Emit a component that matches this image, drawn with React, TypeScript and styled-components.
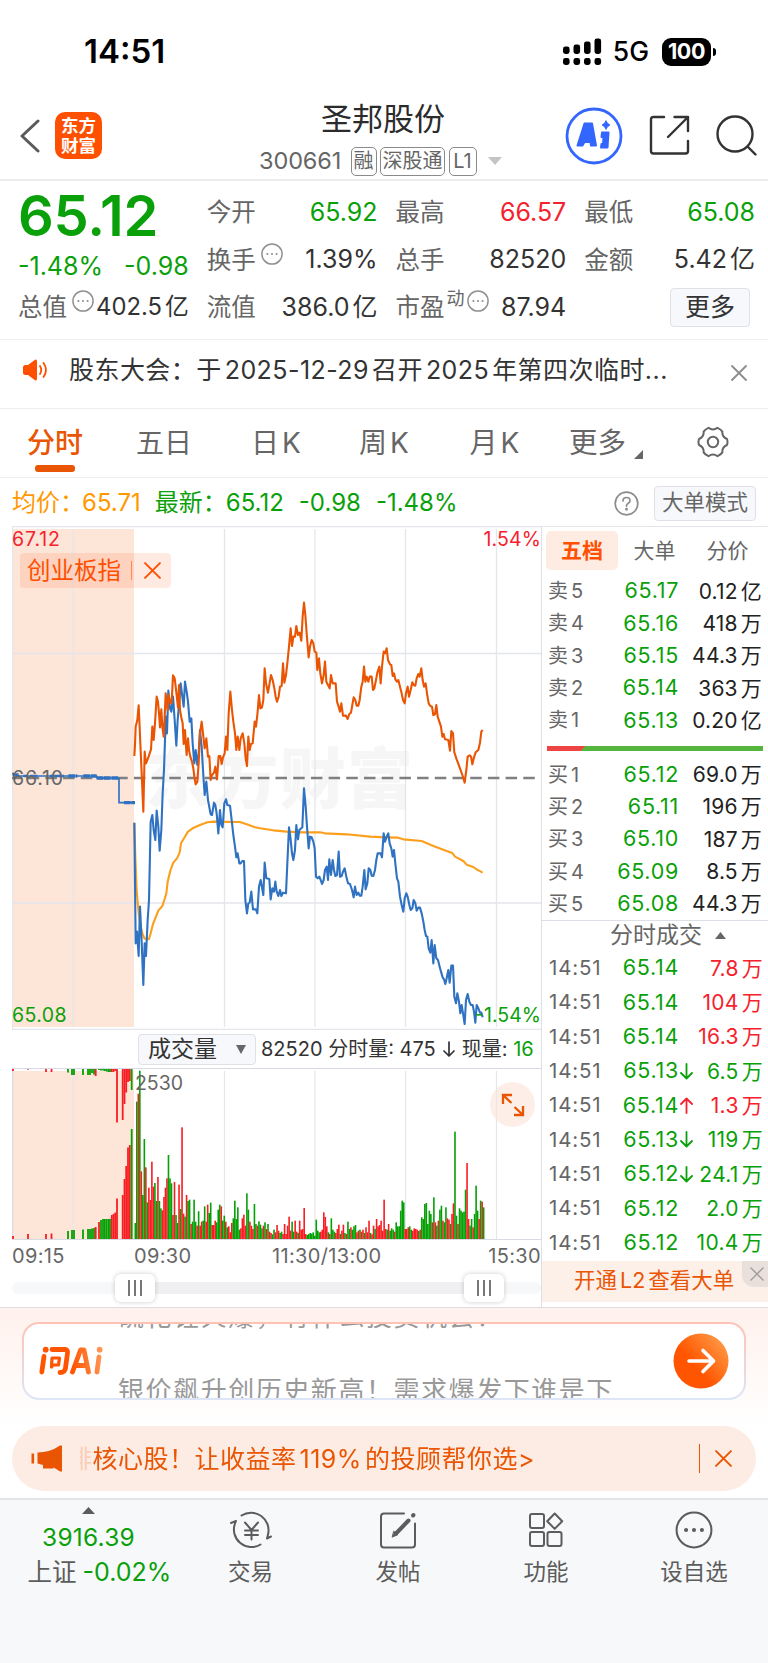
import React from "react";
import styled, { createGlobalStyle } from "styled-components";

const GREEN = "#0aa00a";
const RED = "#f5222d";
const ORANGE = "#ea5504";
const BRAND = "#ff4f00";
const GREY = "#666666";
const INK = "#333333";
const LINE = "#e4e6ec";

const Global = createGlobalStyle`
  * { box-sizing: border-box; }
  body {
    margin: 0;
    background: #fff;
    font-family: Inter, "Noto Sans CJK SC", sans-serif;
    line-height: 1;
    color: ${INK};
  }
  svg { display: block; flex: none; }
`;

const Page = styled.div`
  width: 768px;
  height: 1663px;
  overflow: hidden;
  display: flex;
  flex-direction: column;
  white-space: nowrap;
`;

const Txt = styled.span<{ $s: number; $c?: string; $ls?: number; $w?: number; $ml?: number; $mt?: number }>`
  font-size: ${(p) => p.$s}px;
  color: ${(p) => p.$c ?? "inherit"};
  letter-spacing: ${(p) => p.$ls ?? 0}px;
  font-weight: ${(p) => p.$w ?? 400};
  margin-left: ${(p) => p.$ml ?? 0}px;
  margin-top: ${(p) => p.$mt ?? 0}px;
`;

const Unit = styled.span`
  margin-left: 3px;
`;

/* ---------- status bar ---------- */

const StatusBar = styled.div`
  height: 92px;
  padding: 11px 52px 0 84px;
  display: flex;
  align-items: center;
  color: #000;
`;

const StatusRight = styled.div`
  margin-left: auto;
  display: flex;
  align-items: center;
`;

const Battery = styled.div`
  width: 49px;
  height: 28px;
  margin-left: 13px;
  border-radius: 9px;
  background: #000;
  color: #fff;
  display: flex;
  align-items: center;
  justify-content: center;
`;

const BatteryTip = styled.div`
  width: 3px;
  height: 8px;
  margin-left: 2px;
  border-radius: 0 4px 4px 0;
  background: #000;
`;

/* ---------- header ---------- */

const Header = styled.header`
  height: 89px;
  border-bottom: 2px solid #ececec;
  padding: 0 11px 0 20px;
  display: grid;
  grid-template-columns: 240px 1fr 192px;
  align-items: center;
`;

const HeaderLeft = styled.div`
  display: flex;
  align-items: center;
  gap: 13px;
`;

const Logo = styled.div`
  width: 47px;
  height: 47px;
  border-radius: 10px;
  background: ${BRAND};
  color: #fff;
  display: flex;
  align-items: center;
  justify-content: center;
  text-align: center;
  font-size: 17.5px;
  line-height: 20px;
  font-weight: 700;
  white-space: pre-line;
`;

const Title = styled.div`
  height: 87px;
  display: flex;
  flex-direction: column;
  padding-top: 11px;
`;

const TitleName = styled.div`
  font-size: 31px;
  color: #2b2b2b;
  padding-left: 61px;
  height: 41px;
`;

const CodeRow = styled.div`
  display: flex;
  align-items: center;
  gap: 3.5px;
  height: 32px;
  margin-top: 1px;
`;

const Code = styled.span`
  width: 88px;
  font-size: 23.5px;
  letter-spacing: -0.1px;
  color: ${GREY};
  margin-left: -1px;
`;

const Tag = styled.span<{ $w: number }>`
  width: ${(p) => p.$w}px;
  height: 29px;
  border: 1.5px solid #8a8a8a;
  border-radius: 5px;
  color: ${GREY};
  font-size: 20px;
  display: flex;
  align-items: center;
  justify-content: center;
`;

const HeaderRight = styled.div`
  display: flex;
  align-items: center;
  justify-content: flex-end;
  gap: 26px;
`;

/* ---------- quote ---------- */

const Quote = styled.section`
  height: 159px;
  padding: 7.5px 13px 0 18px;
  border-bottom: 1px solid #eeeeee;
  display: grid;
  grid-template-columns: repeat(4, 1fr);
  column-gap: 18px;
`;

const QuoteCol = styled.div`
  display: flex;
  flex-direction: column;
`;

const QuoteRow = styled.div`
  height: 47.5px;
  display: flex;
  align-items: center;
  justify-content: space-between;
`;

const PriceBig = styled.div`
  height: 54px;
  font-size: 56px;
  font-weight: 600;
  letter-spacing: -0.2px;
  color: ${GREEN};
  display: flex;
  align-items: center;
`;

const PriceDelta = styled.div`
  height: 41px;
  padding-top: 7px;
  display: flex;
  align-items: center;
  justify-content: space-between;
  color: ${GREEN};
`;

const Label = styled.div`
  display: flex;
  align-items: center;
  font-size: 24.5px;
  color: ${GREY};
`;

const Hint = styled.span`
  margin: 0 0 12px 5px;
`;

const Sup = styled.span`
  font-size: 18px;
  margin: 0 -3px 16px 2px;
`;

const GhostButton = styled.button<{ $w: number; $h: number; $s: number }>`
  width: ${(p) => p.$w}px;
  height: ${(p) => p.$h}px;
  padding: 0;
  border: 1.5px solid #dfe1e6;
  border-radius: 4px;
  background: #f7f8fb;
  color: ${INK};
  font: ${(p) => p.$s}px/1 Inter, "Noto Sans CJK SC", sans-serif;
  display: flex;
  align-items: center;
  justify-content: center;
`;

const MoreSlot = styled.div`
  margin: 0 5px 0 auto;
`;

/* ---------- notice ---------- */

const Notice = styled.section`
  height: 69px;
  border-bottom: 1px solid #eeeeee;
  padding: 0 21px 8px 22px;
  display: flex;
  align-items: center;
`;

const NoticeText = styled.div`
  flex: 1;
  margin-left: 21px;
  font-size: 25px;
  letter-spacing: 0.45px;
`;

const NoticeClose = styled.div`
  margin-top: 6px;
`;

/* ---------- tabs ---------- */

const Tabs = styled.nav`
  height: 69px;
  border-bottom: 1px solid #eeeeee;
  display: flex;
`;

const Tab = styled.div<{ $x: number; $on?: boolean }>`
  width: ${(p) => p.$x}px;
  padding-top: 20px;
  display: flex;
  flex-direction: column;
  align-items: center;
  font-size: 28px;
  color: ${(p) => (p.$on ? ORANGE : GREY)};
  font-weight: ${(p) => (p.$on ? 500 : 400)};

  &::after {
    content: "";
    width: 40px;
    height: 7px;
    margin-top: 8px;
    border-radius: 3px;
    background: ${(p) => (p.$on ? ORANGE : "transparent")};
  }
`;

const MoreTab = styled.div`
  width: 96px;
  padding-left: 14px;
  display: flex;
  align-items: center;
  gap: 8px;
  font-size: 28.5px;
  color: ${GREY};

  svg { margin-top: 22px; }
`;

const GearSlot = styled.div`
  padding: 17px 0 0 46px;
`;

/* ---------- info line ---------- */

const Info = styled.div`
  height: 48px;
  padding: 2px 12px 0 12px;
  display: flex;
  align-items: center;
  color: ${GREEN};
  font-size: 24px;
`;

const InfoItem = styled.span<{ $ml?: number; $c?: string }>`
  margin-left: ${(p) => p.$ml ?? 0}px;
  color: ${(p) => p.$c ?? "inherit"};
`;

const InfoTools = styled.div`
  margin-left: auto;
  display: flex;
  align-items: center;
  gap: 15px;

  button { color: ${GREY}; }
`;

/* ---------- body ---------- */

const Body = styled.section`
  height: 782px;
  border-bottom: 1px solid #dcdde2;
  display: grid;
  grid-template-columns: 542px 226px;
`;

const ChartCol = styled.div`
  padding-left: 12px;
  border-right: 1px solid #dcdfe6;
  display: flex;
  flex-direction: column;
`;

const Plot = styled.div`
  position: relative;
`;

const Chip = styled.div`
  position: absolute;
  left: 8px;
  top: 27px;
  width: 151px;
  height: 35px;
  border-radius: 4px;
  background: rgba(255, 96, 32, 0.13);
  color: ${BRAND};
  display: flex;
  align-items: center;
  padding-left: 7px;
  font-size: 23.5px;
`;

const ChipRule = styled.span`
  width: 1px;
  height: 19px;
  margin: 0 12px 0 10px;
  background: #ff8a55;
`;

const VolumeHead = styled.div`
  height: 38px;
  padding-left: 126px;
  display: flex;
  align-items: center;
  font-size: 20px;
`;

const VolumeSelect = styled.div`
  width: 118px;
  height: 31px;
  margin-right: 5px;
  border: 1.5px solid #dfe1e6;
  border-radius: 4px;
  background: #f7f8fb;
  display: flex;
  align-items: center;
  justify-content: space-between;
  padding: 0 9px;
  font-size: 23px;
`;

const Expand = styled.div`
  position: absolute;
  left: 478px;
  top: 14px;
  width: 45px;
  height: 45px;
  border-radius: 50%;
  background: rgba(252, 228, 216, 0.6);
  display: flex;
  align-items: center;
  justify-content: center;
`;

const Times = styled.div`
  height: 32px;
  display: grid;
  grid-template-columns: 122px 138px 1fr auto;
  align-items: center;
  font-size: 20px;
  letter-spacing: 0.35px;
  color: ${GREY};
`;

const Slider = styled.div`
  position: relative;
  height: 12px;
  margin-top: 10px;
  border-radius: 6px;
  background: linear-gradient(90deg, #f7f8fa 0 123px, #f0f0f3 123px 470px, #f7f8fa 470px);
`;

const Handle = styled.div<{ $x: number }>`
  position: absolute;
  left: ${(p) => p.$x}px;
  top: -8px;
  width: 40px;
  height: 28px;
  border-radius: 6px;
  background: #fff;
  box-shadow: 0 0 5px rgba(0, 0, 0, 0.2);
  display: flex;
  align-items: center;
  justify-content: center;
  gap: 4px;

  i {
    width: 2px;
    height: 16px;
    background: #777;
  }
`;

/* ---------- order book ---------- */

const Book = styled.aside`
  display: flex;
  flex-direction: column;
`;

const BookTabs = styled.div`
  height: 49px;
  border-top: 1px solid ${LINE};
  padding: 4px 6px 0 4px;
  display: grid;
  grid-template-columns: 72px 73px 73px;
`;

const BookTab = styled.div<{ $on?: boolean }>`
  height: 39px;
  border-radius: 5px;
  background: ${(p) => (p.$on ? "#feece3" : "transparent")};
  color: ${(p) => (p.$on ? BRAND : GREY)};
  font-weight: ${(p) => (p.$on ? 700 : 400)};
  font-size: 21px;
  padding-bottom: 1px;
  display: flex;
  align-items: center;
  justify-content: center;
`;

const Level = styled.div`
  height: 32.3px;
  padding: 0 6px 0 6px;
  display: grid;
  grid-template-columns: 50px 81px 1fr;
  align-items: center;
  font-size: 21px;

  > :nth-child(1) { color: ${GREY}; font-size: 20px; }
  > :nth-child(2) { color: ${GREEN}; text-align: right; font-size: 21.5px; letter-spacing: 0.7px; }
  > :nth-child(3) { text-align: right; color: #222; letter-spacing: 0.2px; }
`;

const Ratio = styled.div`
  width: 216px;
  height: 5px;
  margin: 10px 0 7px 5px;
  background: linear-gradient(135deg, #ef4444 0 27px, #55b53c 27px);
`;

const TradesHead = styled.div`
  height: 31px;
  border-top: 1.5px solid #dcdfe6;
  padding-left: 68px;
  display: flex;
  align-items: center;
  gap: 13px;
  font-size: 23px;
  color: ${GREY};
`;

const Trade = styled.div<{ $c: string }>`
  height: 34.35px;
  padding: 0 5px 0 7px;
  display: grid;
  grid-template-columns: 54px 76px 14px 1fr;
  align-items: center;
  font-size: 21px;
  color: ${(p) => p.$c};

  > :nth-child(1) { color: ${GREY}; font-size: 20.5px; letter-spacing: 0.8px; }
  > :nth-child(2) { color: ${GREEN}; text-align: right; font-size: 21.5px; letter-spacing: 0.7px; }
  > :nth-child(4) { text-align: right; letter-spacing: 0.3px; }
`;

const Promo = styled.div`
  position: relative;
  height: 41px;
  margin-top: 1px;
  background: #fdf0e9;
  color: ${ORANGE};
  display: flex;
  align-items: center;
  padding: 0 0 2px 32px;
  font-size: 21.5px;
`;

const PromoClose = styled.div`
  position: absolute;
  right: 0;
  top: 0;
  width: 26px;
  height: 26px;
  border-radius: 0 0 0 12px;
  background: #e9dfdb;
  display: flex;
  align-items: center;
  justify-content: center;
  padding-left: 4px;
`;

/* ---------- ask ai ---------- */

const AskWrap = styled.section`
  height: 118px;
  padding: 14px 22px 0 22px;
  background: linear-gradient(#fff1ec, #ffffff);
`;

const AskBox = styled.div`
  height: 78px;
  border: 2px solid transparent;
  border-radius: 17px;
  background:
    linear-gradient(#fff, #fff) padding-box,
    linear-gradient(#ffc2b5, #dde5f8) border-box;
  display: flex;
  align-items: center;
  padding: 0 15px 0 15px;
`;

const Ticker = styled.div`
  height: 74px;
  flex: 1;
  margin-left: 15px;
  overflow: hidden;
  display: flex;
  flex-direction: column;
  gap: 47px;
  font-size: 26px;
  letter-spacing: 1.55px;
  color: #999;

  > div { height: 27px; flex: none; }
  > div:first-child { margin-top: -20px; }
`;

/* ---------- banner ---------- */

const BannerWrap = styled.section`
  height: 72px;
  padding: 0 12px;
`;

const Banner = styled.div`
  height: 65px;
  border-radius: 33px;
  background: #fdece3;
  color: ${ORANGE};
  display: flex;
  align-items: center;
  padding: 0 24px 0 19px;
`;

const BannerText = styled.div`
  flex: 1;
  margin-left: 17px;
  overflow: hidden;
  font-size: 25px;
  line-height: 34px;
  mask-image: linear-gradient(90deg, rgba(0, 0, 0, 0.2) 0 11px, #000 12px);

  > span { margin-left: -13px; letter-spacing: 0.5px; }
`;

const BannerRule = styled.span`
  width: 1.5px;
  height: 29px;
  margin-right: 15px;
  background: ${ORANGE};
`;

/* ---------- bottom bar ---------- */

const BottomBar = styled.nav`
  flex: 1;
  border-top: 2px solid #e3e4e6;
  background: #f7f8fa;
  display: grid;
  grid-template-columns: 177px 147px 148px 148px 148px;
`;

const IndexCell = styled.div`
  padding: 7px 0 0 0;
  display: flex;
  flex-direction: column;
  align-items: center;
`;

const NavCell = styled.div`
  padding-top: 11px;
  display: flex;
  flex-direction: column;
  align-items: center;
  gap: 12px;
  font-size: 22.5px;
  color: #5c5c5c;
`;

/* ---------- icons ---------- */

const Cross = ({ size, color, w = 1.8 }: { size: number; color: string; w?: number }) => (
  <svg width={size} height={size} viewBox="0 0 16 16" stroke={color} strokeWidth={w} strokeLinecap="round">
    <path d="M1 1L15 15M15 1L1 15" />
  </svg>
);

const Triangle = ({ w, h, down, color }: { w: number; h: number; down?: boolean; color: string }) => (
  <svg width={w} height={h} viewBox="0 0 10 10" preserveAspectRatio="none" fill={color}>
    <path d={down ? "M0 0H10L5 10Z" : "M0 10H10L5 0Z"} />
  </svg>
);

const Dots = ({ size, color, w, r }: { size: number; color: string; w: number; r: number }) => (
  <svg width={size} height={size} viewBox="0 0 24 24" fill="none" stroke={color} strokeWidth={w}>
    <circle cx="12" cy="12" r="11" />
    <g fill={color} stroke="none">
      <circle cx="7" cy="12" r={r} />
      <circle cx="12" cy="12" r={r} />
      <circle cx="17" cy="12" r={r} />
    </g>
  </svg>
);

const MoreHint = () => (
  <Hint>
    <Dots size={22} color="#909090" w={1.6} r={1.2} />
  </Hint>
);

const Arrow = ({ up, color }: { up?: boolean; color: string }) => (
  <svg width="14" height="17" viewBox="0 0 14 17" fill="none" stroke={color} strokeWidth="1.8" strokeLinecap="round" strokeLinejoin="round">
    <path d={up ? "M7.5 16V2M2 7L7.5 1.5L13 7" : "M7.5 1V15M2 10L7.5 15.5L13 10"} />
  </svg>
);

const Signal = () => (
  <svg width="39" height="28" viewBox="0 0 39 28">
    {[0, 10.5, 21, 31.5].map((x, i) => (
      <React.Fragment key={x}>
        <rect x={x} y={[8.5, 6.5, 3.5, 0.5][i]} width="6.6" height={[7.5, 9.5, 12.5, 15.5][i]} rx="2.4" />
        <rect x={x} y="20" width="6.6" height="7" rx="2.4" />
      </React.Fragment>
    ))}
  </svg>
);

const AiBadge = () => (
  <svg width="58" height="58" viewBox="0 0 58 58">
    <circle cx="29" cy="29" r="27" fill="none" stroke="#3366ff" strokeWidth="2.8" />
    <g fill="#3366ff" stroke="#3366ff" strokeLinejoin="round" strokeWidth="2">
      <path fillRule="evenodd" d="M19.500 16.500H27L31 38.500H26L25.500 35H19.500L17.500 38.500H12.500ZM23.500 24.500L21.700 29.500H24Z" />
      <path d="M37 25.500H43.500L42.500 40.500H36L36.500 37H38L38.500 30H36.500Z" />
      <path strokeWidth="0.8" d="M41 13.600Q42 16.800 45 18Q42 19.200 41 22.500Q40 19.200 37 18Q40 16.800 41 13.600Z" />
    </g>
  </svg>
);

const Share = () => (
  <svg width="41" height="41" viewBox="0 0 41 41" fill="none" stroke="#333" strokeWidth="2.4" strokeLinecap="round" strokeLinejoin="round">
    <path d="M15 2H4.500Q2 2 2 4.500V36Q2 38.500 4.500 38.500H36.500Q39 38.500 39 36V26" />
    <path d="M25.500 2H39V16M38.500 2.500L19 22" />
  </svg>
);

const Search = () => (
  <svg width="41" height="41" viewBox="0 0 41 41" fill="none" stroke="#333" strokeWidth="2.4" strokeLinecap="round">
    <circle cx="19" cy="19" r="17.500" />
    <path d="M31.500 31.500L39.500 39.500" />
  </svg>
);

const Speaker = () => (
  <svg width="26" height="22" viewBox="0 0 26 22" fill={BRAND}>
    <path d="M1 8.500Q1 6 3.500 6H6L13 0.800Q15 0 15 2.500V19.500Q15 22 13 21.200L6 16H3.500Q1 16 1 13.500Z" />
    <g fill="none" stroke={BRAND} strokeWidth="1.8" strokeLinecap="round">
      <path d="M18 7Q20.500 11 18 15" />
      <path d="M21.500 4Q26.500 11 21.500 18" />
    </g>
  </svg>
);

const Gear = () => (
  <svg width="32" height="32" viewBox="0 0 32 32" fill="none" stroke={GREY} strokeWidth="2" strokeLinejoin="round">
    <path d="M11.500 1.800Q16 5.200 20.500 1.800Q24 3.400 25.400 5.600Q24.800 10.600 30 13Q31 16 30 19Q24.800 21.400 25.400 26.400Q24 28.600 20.500 30.200Q16 26.800 11.500 30.200Q8 28.600 6.600 26.400Q7.200 21.400 2 19Q1 16 2 13Q7.200 10.600 6.600 5.600Q8 3.400 11.500 1.800Z" />
    <circle cx="16" cy="16" r="5.200" />
  </svg>
);

const Question = () => (
  <svg width="25" height="25" viewBox="0 0 25 25" fill="none" stroke="#8c8c8c" strokeWidth="1.7" strokeLinecap="round">
    <circle cx="12.500" cy="12.500" r="11.300" />
    <path d="M9 10Q9 6.500 12.500 6.500T16 9.800Q16 11.500 14 12.600T12.500 15.200" />
    <circle cx="12.500" cy="18.300" r="0.600" fill="#8c8c8c" />
  </svg>
);

const AskLogo = () => (
  <svg width="64" height="30" viewBox="0 0 64 30">
    <defs>
      <linearGradient id="ask" gradientUnits="userSpaceOnUse" x1="0" x2="64" y1="20" y2="8">
        <stop offset="0.5" stopColor="#ff5500" />
        <stop offset="1" stopColor="#ff9a5a" />
      </linearGradient>
    </defs>
    <g fill="none" stroke="url(#ask)" strokeWidth="4.800" strokeLinecap="round" strokeLinejoin="round">
      <path d="M5 10.500L2.800 26" />
      <path d="M13 3.500H26Q29 3.500 28.500 7L26.500 22Q26 26.500 21 26.500" />
      <path strokeWidth="3.200" d="M13 12H20.500L19.500 19H14L12.500 21L13 12Z" />
      <path d="M33.500 26L41.500 4H45L49.500 26M38 19.500H46" />
      <path d="M60 11L58 26" />
    </g>
    <g fill="url(#ask)">
      <circle cx="6.700" cy="3.700" r="2.900" />
      <circle cx="60.700" cy="3.700" r="2.900" />
    </g>
  </svg>
);

const GoButton = () => (
  <svg width="56" height="56" viewBox="0 0 56 56">
    <defs>
      <linearGradient id="go" x1="0.2" y1="0.8" x2="0.9" y2="0.2">
        <stop offset="0.3" stopColor="#ff5500" />
        <stop offset="1" stopColor="#ff9440" />
      </linearGradient>
    </defs>
    <circle cx="28" cy="28" r="27.500" fill="url(#go)" />
    <path d="M16 28H40M30 17.500L40.500 28L30 38.500" fill="none" stroke="#fff" strokeWidth="3.600" strokeLinecap="round" strokeLinejoin="round" />
  </svg>
);

const Megaphone = () => (
  <svg width="32" height="27" viewBox="0 0 32 27" fill={ORANGE}>
    <rect x="0.500" y="8.500" width="2.600" height="10" />
    <path d="M6.500 7.500Q19 7.500 29 0.500H31V26.500H29Q25.500 23.800 22.500 22.500V23.500H12V20L6.500 18.500Z" />
  </svg>
);

const TradeIcon = () => (
  <svg width="42" height="38" viewBox="0 0 42 38" fill="none" stroke="#5c5c5c" strokeWidth="2" strokeLinecap="round" strokeLinejoin="round">
    <path d="M11.500 4.500A17.500 17.500 0 0 1 38 23.500L37 27.500L41 25.500" />
    <path d="M30.500 33.500A17.500 17.500 0 0 1 5 12.500L6 10L1 12" />
    <path d="M15 11.500L21.500 19L28 11.500M21.500 19V28.500M15 19.500H28M15 24H28" />
  </svg>
);

const PostIcon = () => (
  <svg width="38" height="38" viewBox="0 0 38 38" fill="none" stroke="#5c5c5c" strokeWidth="2" strokeLinecap="round" strokeLinejoin="round">
    <path d="M25 2.500H5Q2 2.500 2 5.500V33.500Q2 36.500 5 36.500H33Q36 36.500 36 33.500V12.500" />
    <path strokeWidth="4" d="M29.500 9.500L17 22.500" />
    <path strokeWidth="4" d="M34 4.500L34.500 4" />
    <path fill="#5c5c5c" strokeWidth="1" d="M15 20.500L19 23.500L13.500 26Z" />
  </svg>
);

const FeatureIcon = () => (
  <svg width="36" height="38" viewBox="0 0 36 38" fill="none" stroke="#5c5c5c" strokeWidth="2" strokeLinejoin="round">
    <rect x="2" y="3" width="14" height="14" rx="2" />
    <rect x="2" y="21" width="14" height="14" rx="2" />
    <rect x="19.500" y="21" width="14" height="14" rx="2" />
    <path d="M26.700 2.500L34.200 10.200L26.700 17.900L19.200 10.200Z" />
  </svg>
);

/* ---------- price chart ---------- */

// Series points are in thirds of a pixel.
const INDEX_LINE =
  "403,708 405,675 407,620 412,600 416,556 418,600 421,670 425,760 430,875 433,740 434,695 438,730 443,718 449,700 453,688 457,620 461,660 465,610 470,530 474,545 477,580 480,622 484,568 487,620 491,650 494,590 497,520 500,550 503,570 506,525 510,545 515,550 519,466 524,475 527,500 531,535 534,562 537,495 540,570 545,598 548,610 551,672 555,630 558,680 560,705 564,655 567,690 571,710 576,725 580,745 583,770 587,793 592,785 596,730 600,640 605,605 609,640 614,685 619,655 624,710 628,708 632,780 636,765 642,758 646,740 651,778 656,708 661,708 665,732 669,712 674,700 678,650 682,690 686,580 691,515 696,570 700,605 705,640 709,690 713,650 718,690 722,655 728,640 733,670 737,715 741,738 745,650 749,690 753,672 758,670 764,605 768,620 773,575 777,525 781,565 786,562 790,540 794,445 798,490 804,518 813,465 818,480 823,505 827,530 831,545 836,530 840,500 845,498 849,430 853,488 858,465 862,430 867,380 872,325 876,378 880,350 885,350 889,318 894,345 899,338 904,362 908,290 912,248 916,285 920,340 926,412 930,380 935,360 940,370 944,395 949,398 952,450 957,415 961,460 966,490 971,465 975,425 979,485 984,495 989,505 993,465 998,490 1007,490 1011,545 1016,560 1020,575 1024,550 1029,587 1038,587 1043,597 1048,582 1053,578 1057,555 1061,532 1066,540 1070,557 1075,557 1079,540 1084,500 1088,485 1092,440 1096,485 1100,470 1105,485 1109,470 1115,470 1119,510 1123,505 1128,480 1132,458 1138,440 1142,490 1146,440 1151,395 1155,400 1160,385 1164,420 1170,433 1174,435 1178,468 1182,460 1186,478 1191,485 1195,480 1200,500 1205,520 1209,540 1214,550 1218,520 1223,500 1227,530 1232,510 1237,487 1241,495 1246,497 1250,475 1255,462 1259,470 1264,445 1268,480 1272,500 1277,490 1281,520 1286,550 1291,558 1296,560 1300,585 1305,583 1309,555 1313,590 1318,605 1323,620 1327,650 1331,642 1335,658 1345,660 1350,692 1354,633 1359,640 1363,697 1370,718 1380,745 1387,765 1394,788 1399,750 1403,710 1409,706 1413,710 1417,733 1422,712 1427,697 1435,690 1440,668 1444,635 1448,630";

const PRICE_LINE =
  "403,908 407,1270 411,1235 416,1308 420,1160 425,1265 430,1395 434,1270 438,1308 443,1200 447,1140 452,905 457,885 461,930 466,960 470,872 475,920 479,992 484,930 488,820 492,750 495,660 498,590 501,640 505,512 510,565 514,575 519,530 524,600 529,677 533,600 537,555 542,490 547,530 551,560 555,485 560,515 564,545 569,605 574,595 578,670 583,730 587,690 592,735 596,700 600,630 605,680 609,750 614,825 619,785 624,840 632,883 636,885 642,848 646,855 650,880 655,940 660,870 664,915 668,922 673,850 678,838 682,855 690,857 695,900 700,945 705,980 709,1012 713,1000 718,1030 722,1030 727,1023 732,1023 736,1140 741,1180 745,1150 749,1148 754,1115 759,1168 768,1168 772,1180 777,1100 782,1080 790,1125 794,1028 799,1075 808,1077 812,1138 817,1105 822,1115 826,1085 830,1115 835,1128 840,1110 844,1128 849,1118 858,1120 862,1030 867,922 871,950 876,1000 880,1020 885,990 889,915 894,958 898,930 907,922 912,805 917,860 921,920 926,985 930,950 935,952 940,965 944,985 948,1070 953,1075 958,1070 962,1080 966,1092 971,1080 975,1050 980,1040 984,1080 988,1018 993,1065 998,1020 1002,1050 1006,1068 1011,1065 1016,995 1020,1070 1025,1068 1029,1055 1034,1045 1039,1070 1044,1090 1050,1092 1056,1110 1061,1132 1065,1100 1070,1125 1075,1118 1079,1127 1084,1127 1088,1100 1093,1050 1097,1108 1102,1090 1106,1045 1111,1050 1115,1067 1120,1068 1125,1050 1129,1020 1133,1000 1142,1000 1146,1012 1151,940 1155,965 1160,950 1165,940 1169,970 1174,985 1178,1010 1182,990 1186,1030 1191,1075 1195,1085 1200,1130 1205,1155 1210,1175 1214,1135 1219,1120 1223,1130 1228,1155 1232,1170 1237,1165 1241,1140 1246,1150 1250,1172 1255,1163 1260,1163 1265,1180 1270,1205 1274,1230 1278,1248 1282,1250 1286,1285 1291,1298 1295,1260 1300,1330 1304,1275 1309,1315 1314,1320 1319,1340 1323,1355 1328,1372 1332,1378 1336,1392 1340,1375 1345,1350 1349,1388 1354,1337 1359,1337 1363,1430 1368,1450 1372,1420 1377,1445 1381,1480 1385,1455 1389,1480 1394,1512 1398,1440 1403,1422 1408,1445 1413,1455 1418,1455 1422,1475 1426,1508 1430,1455 1435,1465 1440,1478 1444,1478 1448,1492";

const AVERAGE_LINE =
  "403,908 406,1010 410,1110 415,1170 421,1215 427,1240 433,1255 440,1258 447,1257 452,1240 459,1212 467,1192 475,1172 487,1158 493,1140 499,1120 503,1085 511,1052 520,1028 531,1015 539,998 543,970 552,955 564,935 578,925 600,915 622,907 640,905 720,906 740,913 765,922 780,925 820,931 860,935 910,937 960,937 975,940 1040,943 1110,950 1160,952 1195,953 1210,958 1265,963 1300,978 1340,993 1357,999 1365,1010 1390,1023 1400,1034 1420,1041 1430,1048 1448,1058";

const ChartText = styled.text`
  font-family: Inter, "Noto Sans CJK SC", sans-serif;
  font-size: 19.5px;
`;

const Watermark = styled.text`
  font: 900 66px "Noto Sans CJK SC", sans-serif;
  fill: #f6f6f7;
`;

const GRID_X = [61, 212.5, 303, 393.5, 484.5];

const PriceChart = () => (
  <svg width="529" height="504" viewBox="0 0 529 504">
    <rect x="0" y="3" width="122" height="498" fill="#fde5d8" />
    <Watermark x="133" y="277" textLength="268">东方财富</Watermark>
    <g stroke={LINE} strokeWidth="1.300">
      <path d="M0 0.500H529M0 503.500H529M0.500 0V504" />
      {GRID_X.map((x) => (
        <path key={x} d={`M${x} 3V501`} />
      ))}
      <path d="M0 127.500H529M0 377H529" />
    </g>
    <path d="M0 252H529" stroke="#808080" strokeWidth="2.400" strokeDasharray="11.500 6.200" strokeDashoffset="2" />
    <g transform="translate(-12 -6) scale(0.33333)" fill="none" strokeLinejoin="round">
      <g stroke="#2f72c2">
        <path d="M38 758L42 768H290V774H357V848H404" strokeWidth="5" />
        <path d="M205 768H232M250 768H290M290 774H355M372 848H405" strokeWidth="10" strokeDasharray="20 2" />
        <path d="M38 764H56M70 768H82M90 768H112M150 768H192" strokeWidth="8" />
      </g>
      <polyline points={AVERAGE_LINE} stroke="#fb9f1c" strokeWidth="6.300" />
      <polyline points={PRICE_LINE} stroke="#2f72c2" strokeWidth="6.300" />
      <polyline points={INDEX_LINE} stroke={ORANGE} strokeWidth="6.300" />
    </g>
    <ChartText x="0" y="20" fill={RED} textLength="48">67.12</ChartText>
    <ChartText x="0" y="258.500" fill={GREY} textLength="51">66.10</ChartText>
    <ChartText x="0" y="496" fill={GREEN} textLength="54.500">65.08</ChartText>
    <ChartText x="529" y="20" fill={RED} textAnchor="end" textLength="57.500">1.54%</ChartText>
    <ChartText x="529" y="496" fill={GREEN} textAnchor="end" textLength="66">-1.54%</ChartText>
  </svg>
);

/* ---------- volume chart ---------- */

// One bar per minute: direction (r = up, g = down) and height in thirds of a pixel.
const MINUTES =
  "g48 g412 r436 g505 r203 g132 g300 r215 g110 r154 r117 r232 r157 g168 g114 r186 g114 g92 r86 r126 r154 r182 g252 g182 g167 r72 r171 g72 g48 r163 g90 r335 r76 g67 r132 g114 g118 r45 g52 g118 g52 r40 g83 r40 r52 g55 g98 r52 r103 g78 g109 r42 r42 r55 g50 g88 g103 r98 g55 g70 r52 g35 r38 r20 r48 g62 g115 g60 g95 g28 r32 r62 r73 r40 g137 g88 r52 r40 r30 g105 g45 r40 g53 g43 g32 r40 g50 r30 g45 r22 r18 g14 g28 r20 r42 r25 g18 g22 r15 r45 r15 r40 r67 r25 g52 g22 r55 r22 g18 r55 r28 r30 r93 r15 g12 g15 g18 g16 g20 g10 g58 g25 g20 r22 r28 r80 r66 r38 g20 r15 g62 g28 g22 r18 r30 r43 g15 r25 r43 g18 r15 g52 g30 r35 g28 g38 g42 r20 r25 g28 r22 r28 g18 r35 r20 r55 g18 r14 r40 g30 r60 r38 r42 r55 r25 r118 r30 g28 r45 g25 g32 g28 r22 g50 g38 g38 g85 g115 g110 r30 r30 r35 g38 g28 r25 r32 r30 r28 g24 r28 g65 g60 g105 g108 g45 g85 g75 r50 g125 r50 g40 r55 g88 g100 r55 g50 g95 r62 r58 g45 r75 r107 g322 g70 r45 g92 g85 g80 g82 g148 r228 r60 g40 g60 r35 g75 g160 g85 r60 g115 r112 g95"
    .split(" ")
    .map((s) => ({ up: s[0] === "r", h: Number(s.slice(1)) / 3 }));

// Call auction: x, matched height, unmatched height, colour below, colour above.
const AUCTION: [number, number, number, string, string][] = [
  [1, 3, 2, "r", "r"], [16, 5, 0.7, "r", "r"], [34, 5, 3, "r", "r"], [39.500, 5.500, 3, "r", "r"],
  [56, 8, 3.500, "g", "g"], [60, 9, 6, "g", "g"], [62, 9, 6, "g", "g"], [71, 9.500, 6, "g", "g"],
  [76, 10, 6, "g", "g"], [78, 10, 6, "g", "g"], [80, 10.500, 4, "g", "g"], [82, 11, 5.500, "g", "g"],
  [83.700, 12, 7, "r", "r"], [87, 17, 1, "r", "g"], [89, 19, 1.500, "g", "g"], [91, 20, 1.500, "g", "g"],
  [92.800, 20, 2, "g", "g"], [94.600, 20, 2.500, "g", "g"], [96.400, 20, 3, "g", "g"], [98, 20, 3, "g", "g"],
  [99.800, 24, 3, "r", "r"], [101.500, 25, 3, "r", "r"], [103.200, 26.500, 2, "r", "r"], [105, 40.500, 53.500, "r", "r"],
  [110.700, 44, 51, "r", "r"], [112.500, 60, 35, "r", "r"], [114.200, 73, 23.500, "r", "r"], [116, 91.500, 13, "r", "r"],
  [117.800, 94, 12, "r", "r"], [119.700, 110, 21, "g", "g"],
];

const barColor = (up: boolean) => (up ? "#f81d22" : "#05a005");

const VolumeChart = () => (
  <svg width="529" height="172" viewBox="0 0 529 172">
    <rect x="0" y="3" width="122" height="168" fill="#fde5d8" />
    <g stroke={LINE} strokeWidth="1.200">
      {GRID_X.map((x) => (
        <path key={x} d={`M${x} 3V171`} />
      ))}
      <path d="M0 0.500H529M0.500 0V171" stroke="#d8dbe3" />
    </g>
    {AUCTION.map(([x, low, high, a, b]) => (
      <g key={x}>
        <rect x={x - 0.9} y={171 - low} width="1.800" height={low} fill={barColor(a === "r")} />
        <rect x={x - 0.9} y={1} width="1.800" height={high} fill={barColor(b === "r")} />
      </g>
    ))}
    {MINUTES.map((m, i) => (
      <rect key={i} x={122.500 + i * 1.508} y={171 - m.h} width="1.600" height={m.h} fill={barColor(m.up)} />
    ))}
    <path d="M0 171.500H529" stroke="#d8dbe3" />
    <ChartText x="123" y="22" fill={GREY} textLength="48">2530</ChartText>
  </svg>
);

const ExpandIcon = () => (
  <svg width="24" height="24" viewBox="0 0 24 24" fill="none" stroke={ORANGE} strokeWidth="2.300">
    <path d="M2 11V2H11M2 2L10.500 10M22 13V22H13M22 22L13.500 14" />
  </svg>
);

/* ---------- data ---------- */

const SELLS = [
  ["卖5", "65.17", "0.12", "亿"],
  ["卖4", "65.16", "418", "万"],
  ["卖3", "65.15", "44.3", "万"],
  ["卖2", "65.14", "363", "万"],
  ["卖1", "65.13", "0.20", "亿"],
];

const BUYS = [
  ["买1", "65.12", "69.0", "万"],
  ["买2", "65.11", "196", "万"],
  ["买3", "65.10", "187", "万"],
  ["买4", "65.09", "8.5", "万"],
  ["买5", "65.08", "44.3", "万"],
];

const TRADES = [
  { price: "65.14", vol: "7.8", up: true },
  { price: "65.14", vol: "104", up: true },
  { price: "65.14", vol: "16.3", up: true },
  { price: "65.13", vol: "6.5", up: false, move: true },
  { price: "65.14", vol: "1.3", up: true, move: true },
  { price: "65.13", vol: "119", up: false, move: true },
  { price: "65.12", vol: "24.1", up: false, move: true },
  { price: "65.12", vol: "2.0", up: false },
  { price: "65.12", vol: "10.4", up: false },
];

const Levels = ({ rows }: { rows: string[][] }) => (
  <>
    {rows.map(([name, price, vol, unit]) => (
      <Level key={name}>
        <span>
          {name[0]}
          <Unit>{name[1]}</Unit>
        </span>
        <span>{price}</span>
        <span>
          {vol}
          <Unit>{unit}</Unit>
        </span>
      </Level>
    ))}
  </>
);

export default function App() {
  return (
    <Page>
      <Global />
      <StatusBar>
        <Txt $s={33} $w={600}>14:51</Txt>
        <StatusRight>
          <Signal />
          <Txt $s={26.5} $w={500} $ml={11}>5G</Txt>
          <Battery>
            <Txt $s={21.5} $w={700} $ls={-0.4}>100</Txt>
          </Battery>
          <BatteryTip />
        </StatusRight>
      </StatusBar>

      <Header>
        <HeaderLeft>
          <svg width="22" height="34" viewBox="0 0 22 34" fill="none" stroke="#5a5a5a" strokeWidth="3" strokeLinecap="round" strokeLinejoin="round">
            <path d="M18 2L2 17L18 32" />
          </svg>
          <Logo>{"东方\n财富"}</Logo>
        </HeaderLeft>
        <Title>
          <TitleName>圣邦股份</TitleName>
          <CodeRow>
            <Code>300661</Code>
            <Tag $w={26}>融</Tag>
            <Tag $w={65}>深股通</Tag>
            <Tag $w={28}>L1</Tag>
            <svg width="24" height="8" viewBox="0 0 24 8" fill="#c4c4c4">
              <path d="M8 0H22L15 8Z" />
            </svg>
          </CodeRow>
        </Title>
        <HeaderRight>
          <AiBadge />
          <Share />
          <Search />
        </HeaderRight>
      </Header>

      <Quote>
        <QuoteCol>
          <PriceBig>65.12</PriceBig>
          <PriceDelta>
            <Txt $s={25}>-1.48%</Txt>
            <Txt $s={25}>-0.98</Txt>
          </PriceDelta>
          <QuoteRow>
            <Label>总值<MoreHint /></Label>
            <Txt $s={23.8}>402.5<Unit>亿</Unit></Txt>
          </QuoteRow>
        </QuoteCol>
        <QuoteCol>
          <QuoteRow>
            <Label>今开</Label>
            <Txt $s={25} $c={GREEN}>65.92</Txt>
          </QuoteRow>
          <QuoteRow>
            <Label>换手<MoreHint /></Label>
            <Txt $s={25}>1.39%</Txt>
          </QuoteRow>
          <QuoteRow>
            <Label>流值</Label>
            <Txt $s={25}>386.0<Unit>亿</Unit></Txt>
          </QuoteRow>
        </QuoteCol>
        <QuoteCol>
          <QuoteRow>
            <Label>最高</Label>
            <Txt $s={25} $c={RED}>66.57</Txt>
          </QuoteRow>
          <QuoteRow>
            <Label>总手</Label>
            <Txt $s={25}>82520</Txt>
          </QuoteRow>
          <QuoteRow>
            <Label>市盈<Sup>动</Sup><MoreHint /></Label>
            <Txt $s={25}>87.94</Txt>
          </QuoteRow>
        </QuoteCol>
        <QuoteCol>
          <QuoteRow>
            <Label>最低</Label>
            <Txt $s={25} $c={GREEN}>65.08</Txt>
          </QuoteRow>
          <QuoteRow>
            <Label>金额</Label>
            <Txt $s={25}>5.42<Unit>亿</Unit></Txt>
          </QuoteRow>
          <QuoteRow>
            <MoreSlot>
              <GhostButton $w={80} $h={39} $s={25}>更多</GhostButton>
            </MoreSlot>
          </QuoteRow>
        </QuoteCol>
      </Quote>

      <Notice>
        <Speaker />
        <NoticeText>股东大会：于<Unit>2025-12-29</Unit><Unit>召开</Unit><Unit>2025</Unit><Unit>年第四次临时...</Unit></NoticeText>
        <NoticeClose>
          <Cross size={16} color="#8c8c8c" />
        </NoticeClose>
      </Notice>

      <Tabs>
        <Tab $x={110} $on>分时</Tab>
        <Tab $x={108}>五日</Tab>
        <Tab $x={116}><span>日<Unit>K</Unit></span></Tab>
        <Tab $x={100}><span>周<Unit>K</Unit></span></Tab>
        <Tab $x={121}><span>月<Unit>K</Unit></span></Tab>
        <MoreTab>
          更多
          <svg width="9" height="9" viewBox="0 0 9 9" fill={GREY}>
            <path d="M9 0V9H0Z" />
          </svg>
        </MoreTab>
        <GearSlot>
          <Gear />
        </GearSlot>
      </Tabs>

      <Info>
        <InfoItem $c="#ff9900">均价：</InfoItem>
        <InfoItem $c="#ff9900" $ml={-2}>65.71</InfoItem>
        <InfoItem $ml={14}>最新：</InfoItem>
        <InfoItem $ml={-1}>65.12</InfoItem>
        <InfoItem $ml={15}>-0.98</InfoItem>
        <InfoItem $ml={15}>-1.48%</InfoItem>
        <InfoTools>
          <Question />
          <GhostButton $w={102} $h={35} $s={21.5}>大单模式</GhostButton>
        </InfoTools>
      </Info>

      <Body>
        <ChartCol>
          <Plot>
            <PriceChart />
            <Chip>
              创业板指
              <ChipRule />
              <Cross size={17} color={BRAND} />
            </Chip>
          </Plot>
          <VolumeHead>
            <VolumeSelect>
              成交量
              <Triangle w={10} h={9} down color="#666" />
            </VolumeSelect>
            82520 分时量: 475
            <svg width="26" height="16" viewBox="0 0 26 16" fill="none" stroke={INK} strokeWidth="1.700" strokeLinecap="round" strokeLinejoin="round">
              <path d="M13 1V14.500M8 10L13 15L18 10" />
            </svg>
            现量:&nbsp;
            <Txt $s={20} $c={GREEN}>16</Txt>
          </VolumeHead>
          <Plot>
            <VolumeChart />
            <Expand>
              <ExpandIcon />
            </Expand>
          </Plot>
          <Times>
            <span>09:15</span>
            <span>09:30</span>
            <span>11:30/13:00</span>
            <span>15:30</span>
          </Times>
          <Slider>
            <Handle $x={103}><i /><i /><i /></Handle>
            <Handle $x={452}><i /><i /><i /></Handle>
          </Slider>
        </ChartCol>

        <Book>
          <BookTabs>
            <BookTab $on>五档</BookTab>
            <BookTab>大单</BookTab>
            <BookTab>分价</BookTab>
          </BookTabs>
          <Levels rows={SELLS} />
          <Ratio />
          <Levels rows={BUYS} />
          <TradesHead>
            分时成交
            <Triangle w={11} h={7} color={GREY} />
          </TradesHead>
          {TRADES.map((t, i) => (
            <Trade key={i} $c={t.up ? RED : GREEN}>
              <span>14:51</span>
              <span>{t.price}</span>
              <span>{t.move && <Arrow up={t.up} color={t.up ? RED : GREEN} />}</span>
              <span>
                {t.vol}
                <Unit>万</Unit>
              </span>
            </Trade>
          ))}
          <Promo>
            开通<Unit>L2</Unit>
            <Unit>查看大单</Unit>
            <PromoClose>
              <Cross size={14} color="#999" w={1.6} />
            </PromoClose>
          </Promo>
        </Book>
      </Body>

      <AskWrap>
        <AskBox>
          <AskLogo />
          <Ticker>
            <div>硫化锂火爆，有什么投资机会？</div>
            <div>银价飙升创历史新高！需求爆发下谁是下</div>
          </Ticker>
          <GoButton />
        </AskBox>
      </AskWrap>

      <BannerWrap>
        <Banner>
          <Megaphone />
          <BannerText>
            <span>排核心股！让收益率<Unit>119%</Unit><Unit>的投顾帮你选&gt;</Unit></span>
          </BannerText>
          <BannerRule />
          <Cross size={17} color={ORANGE} />
        </Banner>
      </BannerWrap>

      <BottomBar>
        <IndexCell>
          <Triangle w={13} h={7} color="#5c5c5c" />
          <Txt $s={24.5} $c={GREEN} $ls={0.2} $mt={11}>3916.39</Txt>
          <Txt $s={24.5} $c="#5c5c5c" $mt={10} $ml={22}>
            上证<Txt $s={25} $c={GREEN} $ml={6}>-0.02%</Txt>
          </Txt>
        </IndexCell>
        <NavCell><TradeIcon />交易</NavCell>
        <NavCell><PostIcon />发帖</NavCell>
        <NavCell><FeatureIcon />功能</NavCell>
        <NavCell><Dots size={38} color="#5c5c5c" w={1.3} r={1.3} />设自选</NavCell>
      </BottomBar>
    </Page>
  );
}
